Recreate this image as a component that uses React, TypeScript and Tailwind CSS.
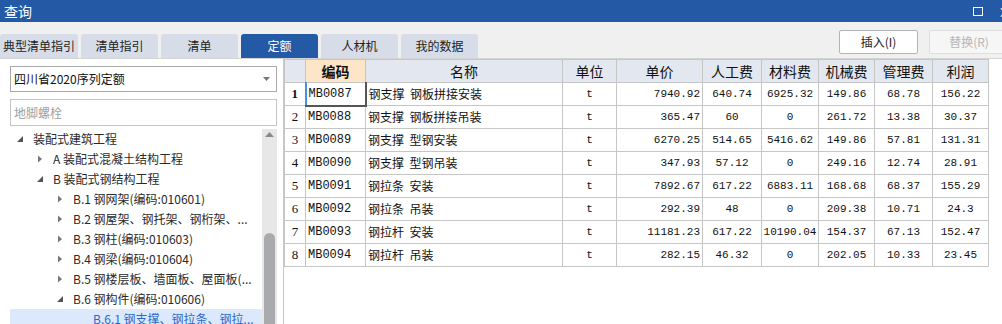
const cjk = { fontFamily: '"Noto Sans CJK SC", "Liberation Sans", sans-serif' }
const mono = { fontFamily: '"Liberation Mono", "Noto Sans CJK SC", monospace' }

const tabs = ["典型清单指引", "清单指引", "清单", "定额", "人材机", "我的数据"]
const tabWidths = ["w-[78px]", "w-[77px]", "w-[77px]", "w-[77px]", "w-[77px]", "w-[77px]"]

interface TreeNode {
  label: string
  level: number
  open?: boolean
  leaf?: boolean
  selected?: boolean
}

const tree: TreeNode[] = [
  { label: "装配式建筑工程", level: 0, open: true },
  { label: "A 装配式混凝土结构工程", level: 1 },
  { label: "B 装配式钢结构工程", level: 1, open: true },
  { label: "B.1 钢网架(编码:010601)", level: 2 },
  { label: "B.2 钢屋架、钢托架、钢桁架、...", level: 2 },
  { label: "B.3 钢柱(编码:010603)", level: 2 },
  { label: "B.4 钢梁(编码:010604)", level: 2 },
  { label: "B.5 钢楼层板、墙面板、屋面板(...", level: 2 },
  { label: "B.6 钢构件(编码:010606)", level: 2, open: true },
  { label: "B.6.1 钢支撑、钢拉条、钢拉...", level: 3, leaf: true, selected: true },
]

const indent = ["pl-[6px]", "pl-[26px]", "pl-[46px]", "pl-[66px]"]

const rows = [
  ["MB0087", "钢支撑 钢板拼接安装", "7940.92", "640.74", "6925.32", "149.86", "68.78", "156.22"],
  ["MB0088", "钢支撑 钢板拼接吊装", "365.47", "60", "0", "261.72", "13.38", "30.37"],
  ["MB0089", "钢支撑 型钢安装", "6270.25", "514.65", "5416.62", "149.86", "57.81", "131.31"],
  ["MB0090", "钢支撑 型钢吊装", "347.93", "57.12", "0", "249.16", "12.74", "28.91"],
  ["MB0091", "钢拉条 安装", "7892.67", "617.22", "6883.11", "168.68", "68.37", "155.29"],
  ["MB0092", "钢拉条 吊装", "292.39", "48", "0", "209.38", "10.71", "24.3"],
  ["MB0093", "钢拉杆 安装", "11181.23", "617.22", "10190.04", "154.37", "67.13", "152.47"],
  ["MB0094", "钢拉杆 吊装", "282.15", "46.32", "0", "202.05", "10.33", "23.45"],
]

const cols = [
  { title: "", w: "w-[21px]" },
  { title: "编码", w: "w-[60px]" },
  { title: "名称", w: "w-[197px]" },
  { title: "单位", w: "w-[54px]" },
  { title: "单价", w: "w-[86px]" },
  { title: "人工费", w: "w-[59px]" },
  { title: "材料费", w: "w-[57px]" },
  { title: "机械费", w: "w-[56px]" },
  { title: "管理费", w: "w-[58px]" },
  { title: "利润", w: "w-[56px]" },
]

function Arrow({ open }: { open?: boolean }) {
  if (open) {
    return (
      <svg width="8" height="8" viewBox="0 0 8 8" className="shrink-0">
        <path d="M7 1 L7 7 L1 7 Z" fill="#555" />
      </svg>
    )
  }
  return (
    <svg width="8" height="8" viewBox="0 0 8 8" className="shrink-0">
      <path d="M2 0.5 L6 4 L2 7.5 Z" fill="#777" />
    </svg>
  )
}

export default function App() {
  return (
    <div className="w-[1002px] h-[324px] overflow-hidden bg-white flex flex-col" style={cjk}>
      {/* title bar */}
      <div className="h-[22px] bg-[#2459a5] flex items-center justify-between pl-[4px] text-white">
        <span className="text-[14px] leading-none">查询</span>
        <div className="flex items-center gap-[15px]">
          <div className="w-[10px] h-[9px] border border-white" />
          <span className="text-[14px] leading-none w-[4px] overflow-hidden">×</span>
        </div>
      </div>

      {/* tabs + buttons */}
      <div className="h-[37px] bg-[#f0f0f0] flex items-end justify-between border-b border-[#d4d4d4]">
        <div className="flex gap-[3px] items-end">
          {tabs.map((t, i) => (
            <div
              key={t}
              className={`${tabWidths[i]} h-[24px] rounded-t-[3px] flex items-center justify-center text-[12px] ${
                i === 3 ? "bg-[#2459a5] text-white" : "bg-[#d7dde8] text-[#222]"
              }`}
            >
              {t}
            </div>
          ))}
        </div>
        <div className="flex gap-[11px] self-start mt-[8px] mr-[-7px]">
          <button className="w-[79px] h-[24px] bg-white border border-[#b4b4b4] rounded-[2px] text-[12px] text-[#222]">
            插入(I)
          </button>
          <button className="w-[80px] h-[24px] bg-[#f6f6f6] border border-[#dedede] rounded-[2px] text-[12px] text-[#b5b5b5]">
            替换(R)
          </button>
        </div>
      </div>

      <div className="flex flex-1 min-h-0">
        {/* left panel */}
        <div className="w-[284px] shrink-0 border-r border-[#c8c8c8] flex flex-col pl-[10px] pr-[6px] pt-[7px]">
          <div className="h-[26px] border border-[#aaaaaa] flex items-center justify-between pl-[3px] pr-[6px] text-[12px] text-[#111]">
            <span>四川省2020序列定额</span>
            <svg width="7" height="4" viewBox="0 0 7 4">
              <path d="M0 0 L7 0 L3.5 4 Z" fill="#777" />
            </svg>
          </div>
          <div className="h-[27px] mt-[7px] border border-[#c4c4c4] flex items-center pl-[3px] text-[12px] text-[#a0a0a0]">
            地脚螺栓
          </div>
          <div className="flex flex-1 min-h-0 mt-[3px]">
            <div className="flex-1 flex flex-col">
              {tree.map((n) => (
                <div
                  key={n.label}
                  className={`h-[20px] shrink-0 flex items-center text-[12px] ${indent[n.level]} ${
                    n.selected ? "bg-[#dce8fc] text-[#2b68c8]" : "text-[#2a2a2a]"
                  }`}
                >
                  <span className="w-[17px] flex items-center">{!n.leaf && <Arrow open={n.open} />}</span>
                  <span className="whitespace-nowrap">{n.label}</span>
                </div>
              ))}
            </div>
            <div className="w-[15px] bg-[#e7e7e7] flex flex-col items-center pt-[3px]">
              <svg width="9" height="5" viewBox="0 0 9 5">
                <path d="M0 5 L9 5 L4.5 0 Z" fill="#8a8a8a" />
              </svg>
              <div className="mt-[96px] w-[11px] flex-1 bg-[#a8aaae] rounded-t-[6px]" />
            </div>
          </div>
        </div>

        {/* table */}
        <div className="flex-1 min-w-0 bg-white">
          <table className="table-fixed border-collapse text-[11px] text-[#111]">
            <thead>
              <tr className="h-[23px]">
                {cols.map((c, i) => (
                  <th
                    key={i}
                    className={`${c.w} border border-[#c6c6c6] font-normal text-[14px] p-0 ${
                      i === 1 ? "bg-[#fde6c8] font-semibold" : "bg-[#e3e8f0]"
                    }`}
                    style={cjk}
                  >
                    {c.title}
                  </th>
                ))}
              </tr>
            </thead>
            <tbody>
              {rows.map((r, ri) => (
                <tr key={r[0]} className="h-[23px]">
                  <td
                    className={`border border-[#c6c6c6] text-center p-0 text-[13px] ${ri === 0 ? "font-bold" : ""}`}
                    style={{ fontFamily: '"Liberation Serif", serif' }}
                  >
                    {ri + 1}
                  </td>
                  <td
                    className={`border border-[#c6c6c6] pl-[2px] p-0 text-[12px] ${
                      ri === 0 ? "border-l-2 border-l-[#4a90e2] border-r-2 border-r-[#555] border-b-2 border-b-[#555]" : ""
                    }`}
                    style={mono}
                  >
                    {r[0]}
                  </td>
                  <td className="border border-[#c6c6c6] pl-[2px] p-0 text-[12px] whitespace-pre" style={cjk}>
                    {r[1].replace(" ", "  ")}
                  </td>
                  <td className="border border-[#c6c6c6] text-center p-0" style={mono}>
                    t
                  </td>
                  <td className="border border-[#c6c6c6] text-right pr-[2px] p-0" style={mono}>
                    {r[2]}
                  </td>
                  {r.slice(3).map((v, vi) => (
                    <td key={vi} className="border border-[#c6c6c6] text-center p-0" style={mono}>
                      {v}
                    </td>
                  ))}
                </tr>
              ))}
            </tbody>
          </table>
        </div>
      </div>
    </div>
  )
}
